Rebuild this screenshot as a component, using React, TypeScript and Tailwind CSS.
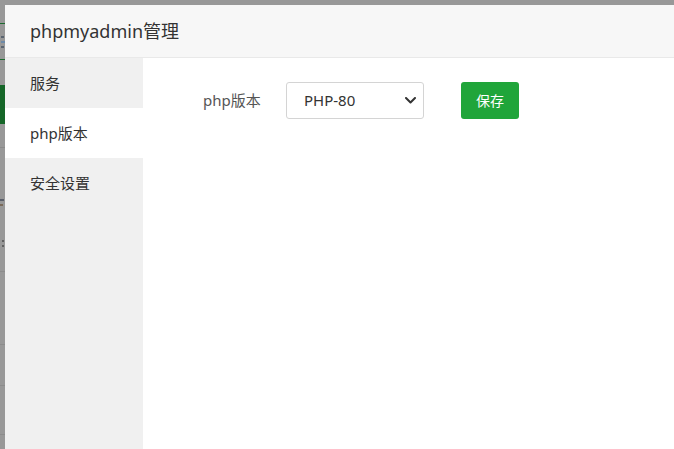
const FONT = { fontFamily: '"Noto Sans", "Noto Sans CJK SC", sans-serif' };

const MENU = ['服务', 'php版本', '安全设置'];

function BackdropStrip() {
  // sliver of the dimmed page that shows left of the dialog
  return (
    <div className="w-[5px] shrink-0 flex flex-col overflow-hidden bg-[#989898]">
      <div className="h-[23px] shrink-0" />
      <div className="h-px shrink-0 bg-[#1d6a2f]" />
      <div className="h-[35px] shrink-0 flex flex-col justify-center gap-[3px] pl-px">
        <div className="h-[2px] w-[3px] bg-[#5a6470]" />
        <div className="h-[2px] w-[4px] bg-[#6d8aa8]" />
        <div className="h-[2px] w-[3px] bg-[#5a6470]" />
      </div>
      <div className="h-px shrink-0 bg-[#1d6a2f]" />
      <div className="h-[25px] shrink-0" />
      <div className="h-[39px] shrink-0 bg-[#156628]" />
      <div className="h-[24px] shrink-0 border-b border-[#8a8a8a]" />
      <div className="h-[46px] shrink-0" />
      <div className="h-[16px] shrink-0 flex flex-col justify-center gap-[3px]">
        <div className="h-[2px] w-[4px] bg-[#5a5f6a]" />
        <div className="h-[2px] w-[3px] bg-[#7a6a5a]" />
      </div>
      <div className="h-[26px] shrink-0" />
      <div className="h-[14px] shrink-0 flex flex-col justify-center gap-[3px] pl-[2px]">
        <div className="h-[2px] w-[2px] bg-[#606060]" />
        <div className="h-[2px] w-[2px] bg-[#606060]" />
      </div>
      <div className="h-[22px] shrink-0 border-b border-[#8c8c8c]" />
      <div className="h-[73px] shrink-0 border-b border-[#8c8c8c]" />
      <div className="h-[41px] shrink-0 border-b border-[#8c8c8c]" />
      <div className="h-[49px] shrink-0 border-b border-[#8c8c8c]" />
      <div className="flex-1" />
    </div>
  );
}

function Chevron() {
  return (
    <svg width="11" height="7" viewBox="0 0 11 7" fill="none">
      <path d="M1 1l4.5 4.5L10 1" stroke="#333" strokeWidth="2" strokeLinecap="round" strokeLinejoin="round" />
    </svg>
  );
}

export default function App() {
  const active = 1;
  return (
    <div className="w-[674px] h-[449px] flex overflow-hidden bg-[#989898]" style={FONT}>
      <BackdropStrip />
      <div className="flex-1 flex flex-col min-w-0">
        <div className="h-[5px] shrink-0" />
        <div className="flex-1 flex flex-col bg-white min-h-0">
          {/* Header */}
          <div className="h-[53px] shrink-0 flex items-center pl-[25px] bg-[#f7f7f7] border-b border-[#e9e9e9]">
            <span className="text-[18px] text-[#333]">phpmyadmin管理</span>
          </div>

          <div className="flex-1 flex min-h-0">
            {/* Sidebar */}
            <div className="w-[138px] shrink-0 bg-[#f0f0f0] flex flex-col">
              {MENU.map((m, i) => (
                <div
                  key={m}
                  className={`h-[50px] flex items-center pl-[25px] text-[15px] text-[#333] ${
                    i === active ? 'bg-white' : ''
                  }`}
                >
                  {m}
                </div>
              ))}
            </div>

            {/* Content */}
            <div className="flex-1 pt-[24px] pl-[60px]">
              <div className="flex items-center h-[37px]">
                <span className="text-[15px] text-[#555] w-[58px]">php版本</span>
                <div className="ml-[25px] w-[138px] h-[37px] flex items-center justify-between pl-[17px] pr-[7px] border border-[#d4d4d4] rounded-[3px] bg-white">
                  <span className="text-[15px] text-[#333]">PHP-80</span>
                  <Chevron />
                </div>
                <button className="ml-[37px] w-[58px] h-[37px] rounded-[3px] bg-[#20a53a] text-white text-[14px] flex items-center justify-center">
                  保存
                </button>
              </div>
            </div>
          </div>
        </div>
      </div>
    </div>
  );
}
